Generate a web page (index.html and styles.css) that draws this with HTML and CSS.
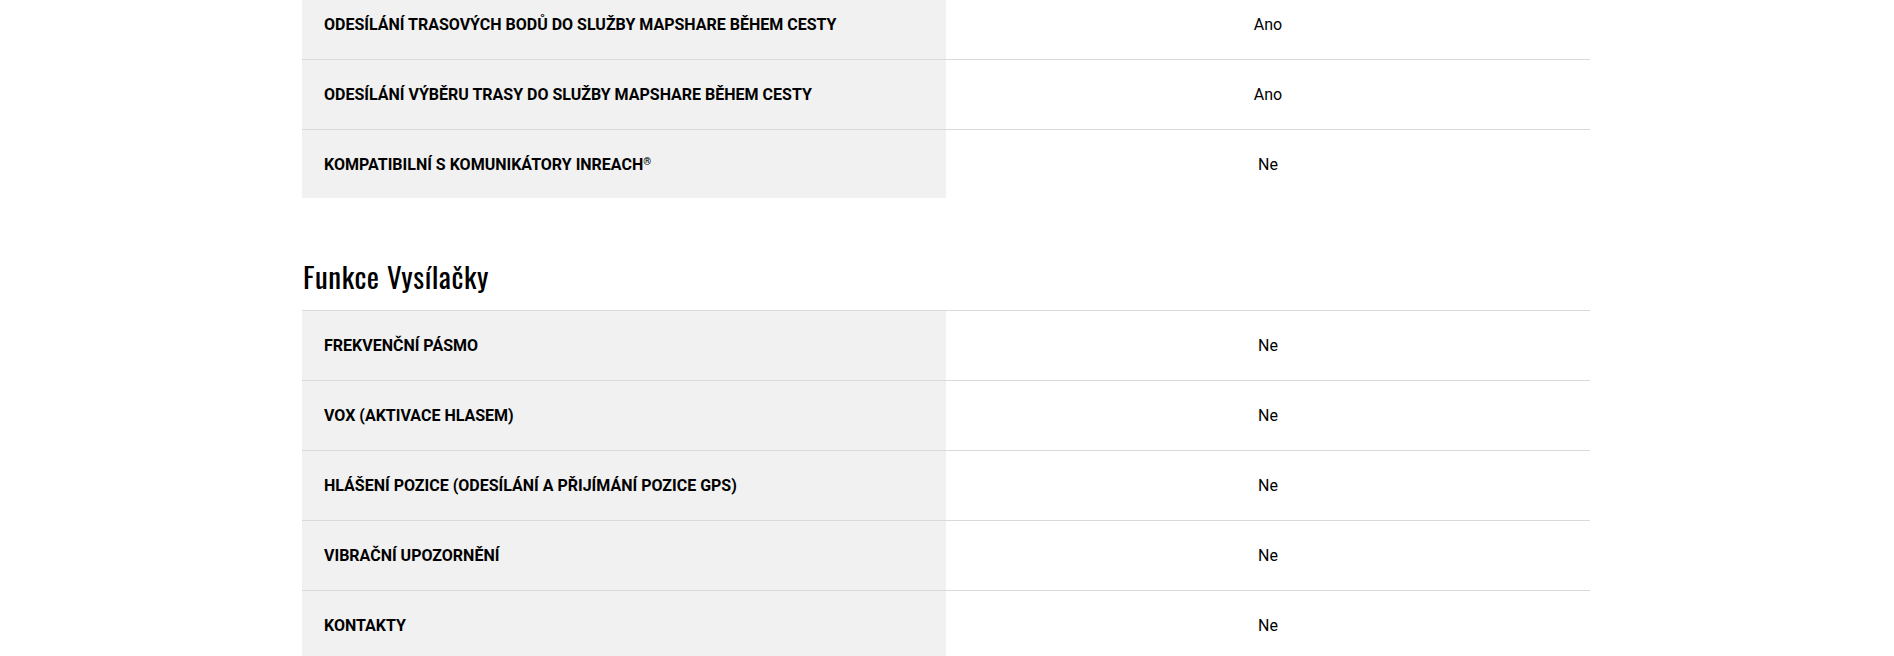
FILE: index.html
```html
<!DOCTYPE html>
<html lang="cs">
<head>
<meta charset="utf-8">
<title>Specifikace</title>
<link rel="stylesheet" href="styles.css">
</head>
<body>
<main class="specs">
  <section class="spec-group spec-group--first">
    <div class="spec-table">
      <div class="spec-row">
        <div class="spec-label">Odesílání trasových bodů do služby MapShare během cesty</div>
        <div class="spec-value">Ano</div>
      </div>
      <div class="spec-row">
        <div class="spec-label">Odesílání výběru trasy do služby MapShare během cesty</div>
        <div class="spec-value">Ano</div>
      </div>
      <div class="spec-row">
        <div class="spec-label"><span>Kompatibilní s komunikátory inReach<sup class="reg">®</sup></span></div>
        <div class="spec-value">Ne</div>
      </div>
    </div>
  </section>
  <section class="spec-group">
    <h2 class="spec-title">Funkce Vysílačky</h2>
    <div class="spec-table">
      <div class="spec-row">
        <div class="spec-label">Frekvenční pásmo</div>
        <div class="spec-value">Ne</div>
      </div>
      <div class="spec-row">
        <div class="spec-label">VOX (aktivace hlasem)</div>
        <div class="spec-value">Ne</div>
      </div>
      <div class="spec-row">
        <div class="spec-label">Hlášení pozice (odesílání a přijímání pozice GPS)</div>
        <div class="spec-value">Ne</div>
      </div>
      <div class="spec-row">
        <div class="spec-label">Vibrační upozornění</div>
        <div class="spec-value">Ne</div>
      </div>
      <div class="spec-row">
        <div class="spec-label">Kontakty</div>
        <div class="spec-value">Ne</div>
      </div>
    </div>
  </section>
</main>
</body>
</html>
```
FILE: styles.css
```css
html, body {
  margin: 0;
  padding: 0;
  background: #ffffff;
  color: #000000;
  font-family: Roboto, "Liberation Sans", Arial, sans-serif;
}

.specs {
  width: 1288px;
  margin: -11px 0 0 302px;
}

.spec-table {
  display: flex;
  flex-direction: column;
}

.spec-row {
  display: grid;
  grid-template-columns: 1fr 1fr;
  height: 70px;
  border-top: 1px solid #dadada;
  box-sizing: border-box;
}

.spec-group--first .spec-row:last-child {
  height: 69px;
}

.spec-label {
  background: #f1f1f1;
  display: flex;
  align-items: center;
  padding: 0 22px;
  font-size: 16px;
  font-weight: 700;
  text-transform: uppercase;
  letter-spacing: 0;
}

.reg {
  font-size: 10px;
  line-height: 0;
  vertical-align: 5px;
}

.spec-value {
  display: flex;
  align-items: center;
  justify-content: center;
  font-size: 16px;
  font-weight: 400;
}

.spec-title {
  margin: 0;
  padding: 57px 0 13px 1px;
  font-family: Oswald, "Roboto Condensed", "Liberation Sans Narrow", "DejaVu Sans Condensed", sans-serif;
  font-stretch: condensed;
  font-weight: 400;
  font-size: 29px;
  line-height: 42px;
  letter-spacing: 0.6px;
}
```
